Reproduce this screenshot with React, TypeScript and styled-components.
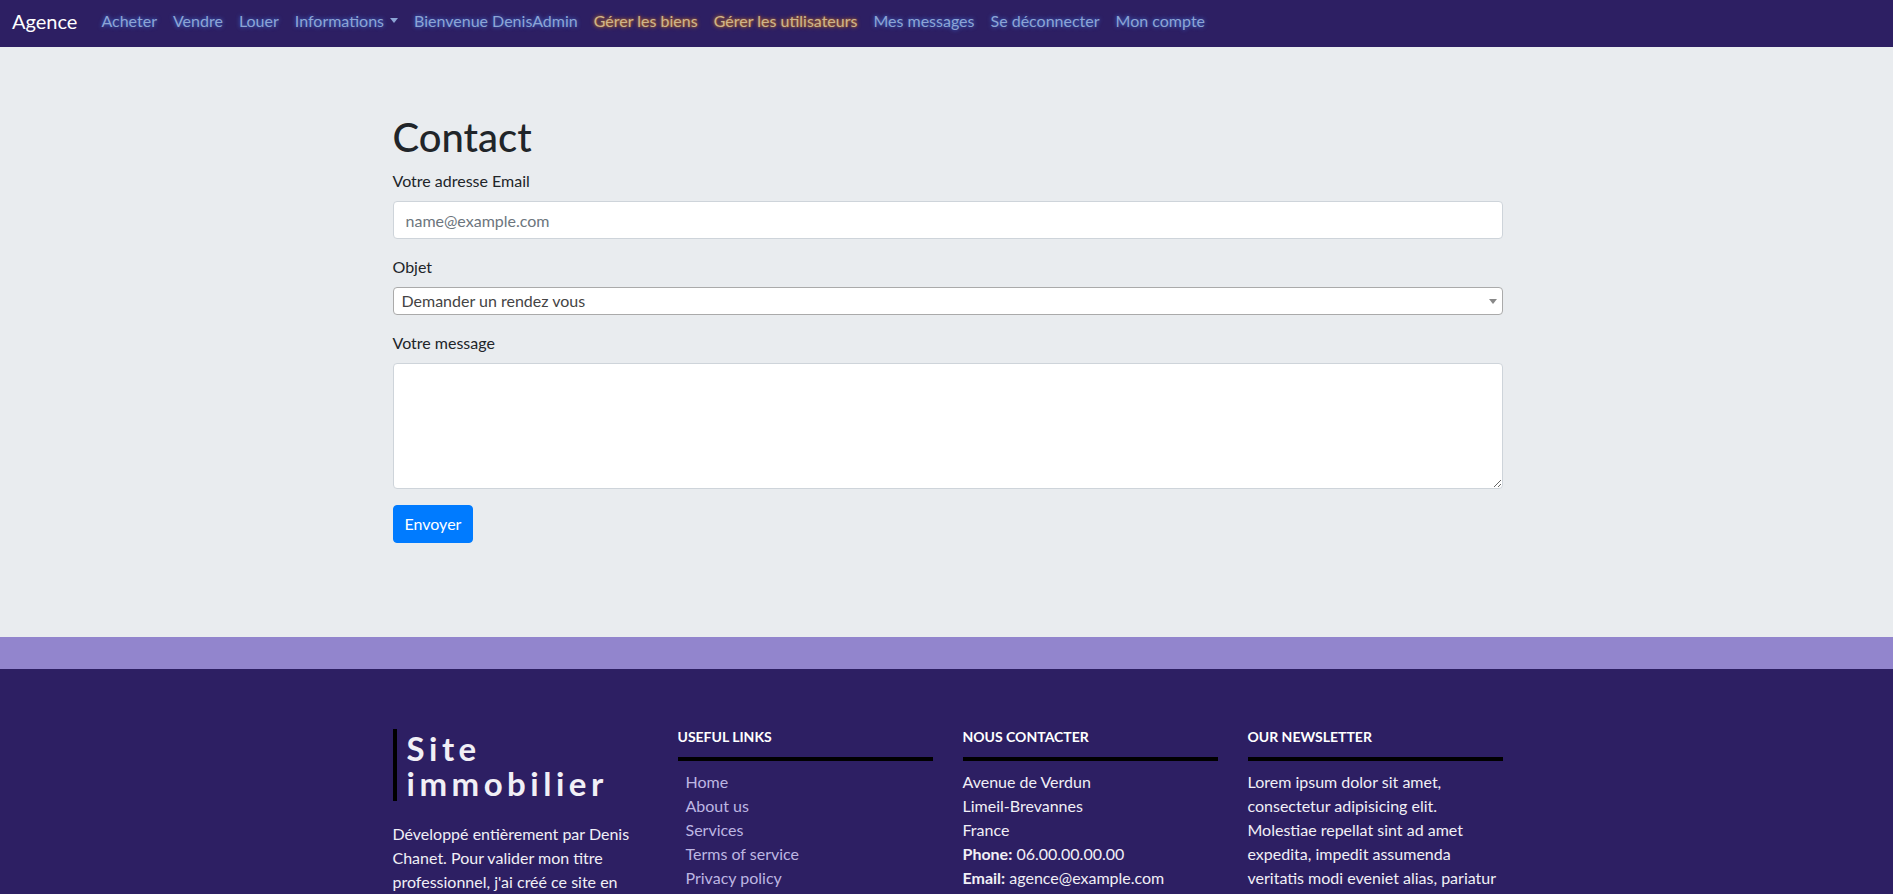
import React from "react";
import styled, { createGlobalStyle } from "styled-components";

const FONT = `"Segoe UI", Lato, "Liberation Sans", sans-serif`;

const GlobalStyle = createGlobalStyle`
  * { box-sizing: border-box; }
  html, body { margin: 0; padding: 0; }
  body {
    font-family: ${FONT};
    font-size: 16px;
    line-height: 1.5;
    color: #212529;
    background: #9285cd;
  }
`;

const NavBar = styled.nav`
  height: 47px;
  background: #2d1f63;
  display: flex;
  align-items: center;
  padding: 0 12px 6px;
`;

const Brand = styled.a`
  font-size: 20px;
  color: #ffffff;
  margin-right: 16px;
  text-decoration: none;
  line-height: 30px;
`;

const NavList = styled.ul`
  display: flex;
  align-items: center;
  list-style: none;
  margin: 0;
  padding: 0;
`;

const NavLink = styled.a<{ $gold?: boolean }>`
  display: block;
  padding: 0 8px;
  font-size: 16px;
  line-height: 24px;
  text-decoration: none;
  color: ${(p) => (p.$gold ? "#cdb58c" : "#8ca5d5")};
  text-shadow: ${(p) =>
    p.$gold
      ? "0 0 4px rgba(205, 120, 30, 0.95), 0 0 2px rgba(205, 120, 30, 0.7)"
      : "0 0 4px rgba(70, 130, 240, 0.85)"};
`;

const Caret = styled.span`
  display: inline-block;
  margin-left: 6px;
  vertical-align: 4px;
  border-top: 5px solid #8ca5d5;
  border-left: 4.5px solid transparent;
  border-right: 4.5px solid transparent;
`;

const Jumbotron = styled.main`
  background: #e9ecef;
  padding: 66px 0 94px;
  margin-bottom: 32px;
`;

const Container = styled.div`
  width: 1110px;
  margin: 0 auto;
  position: relative;
  left: 1px;
`;

const Title = styled.h1`
  font-size: 40px;
  font-weight: 500;
  line-height: 1.2;
  margin: 0 0 8px;
  color: #212529;
`;

const FormGroup = styled.div`
  margin-bottom: 16px;
`;

const Label = styled.label`
  display: block;
  margin-bottom: 8px;
  font-size: 16px;
  line-height: 24px;
  color: #212529;
`;

const Input = styled.input`
  display: block;
  width: 100%;
  height: 38px;
  padding: 6px 12px;
  font-family: ${FONT};
  font-size: 16px;
  line-height: 24px;
  color: #495057;
  background: #fff;
  border: 1px solid #ced4da;
  border-radius: 4px;
  &::placeholder { color: #6c757d; }
`;

const SelectBox = styled.div`
  position: relative;
  height: 28px;
  background: #fff;
  border: 1px solid #aaa;
  border-radius: 4px;
  padding-left: 8px;
  line-height: 26px;
  font-size: 16px;
  color: #444;
`;

const SelectArrow = styled.span`
  position: absolute;
  right: 5px;
  top: 11px;
  border-top: 5px solid #888;
  border-left: 4px solid transparent;
  border-right: 4px solid transparent;
`;

const TextArea = styled.textarea`
  display: block;
  width: 100%;
  height: 126px;
  padding: 6px 12px;
  font-family: ${FONT};
  font-size: 16px;
  background: #fff;
  border: 1px solid #ced4da;
  border-radius: 4px;
  resize: vertical;
`;

const Button = styled.button`
  font-family: ${FONT};
  font-size: 16px;
  line-height: 24px;
  padding: 6px 11px;
  color: #fff;
  background: #007bff;
  border: 1px solid #007bff;
  border-radius: 4px;
`;

const Footer = styled.footer`
  background: #2d1f63;
  padding: 60px 0 40px;
  color: #f2f2f7;
`;

const FooterGrid = styled.div`
  width: 1110px;
  margin: 0 auto;
  display: grid;
  grid-template-columns: repeat(4, 1fr);
  column-gap: 30px;
  align-items: start;
  position: relative;
  left: 1px;
`;

const BrandTitle = styled.h2`
  margin: 0 0 21px;
  border-left: 4px solid #000;
  padding: 2px 0 0 10px;
  font-size: 33px;
  font-weight: 700;
  line-height: 35px;
  letter-spacing: 4.5px;
  color: #f1eff6;
`;

const FooterText = styled.p`
  margin: 0;
  font-size: 16px;
  line-height: 24px;
  color: #f1eff6;
`;

const ColTitle = styled.h4`
  margin: 0;
  font-size: 14px;
  font-weight: 700;
  line-height: 16px;
  text-transform: uppercase;
  color: #ffffff;
  padding-bottom: 12px;
  border-bottom: 4px solid #000;
`;

const ColBody = styled.div`
  margin-top: 9px;
  font-size: 16px;
  line-height: 24px;
  color: #f1eff6;
`;

const LinkList = styled.ul`
  list-style: none;
  margin: 9px 0 0;
  padding: 0 0 0 8px;
`;

const FooterLink = styled.a`
  display: block;
  font-size: 16px;
  line-height: 24px;
  color: #bdb6e2;
  text-decoration: none;
`;

const navItems = [
  { label: "Acheter" },
  { label: "Vendre" },
  { label: "Louer" },
  { label: "Informations", dropdown: true },
  { label: "Bienvenue DenisAdmin" },
  { label: "Gérer les biens", gold: true },
  { label: "Gérer les utilisateurs", gold: true },
  { label: "Mes messages" },
  { label: "Se déconnecter" },
  { label: "Mon compte" },
];

const usefulLinks = ["Home", "About us", "Services", "Terms of service", "Privacy policy"];

export default function App() {
  return (
    <>
      <GlobalStyle />
      <NavBar>
        <Brand href="#">Agence</Brand>
        <NavList>
          {navItems.map((item) => (
            <li key={item.label}>
              <NavLink href="#" $gold={item.gold}>
                {item.label}
                {item.dropdown && <Caret />}
              </NavLink>
            </li>
          ))}
        </NavList>
      </NavBar>

      <Jumbotron>
        <Container>
          <Title>Contact</Title>
          <form onSubmit={(e) => e.preventDefault()}>
            <FormGroup>
              <Label htmlFor="email">Votre adresse Email</Label>
              <Input id="email" type="email" placeholder="name@example.com" />
            </FormGroup>
            <FormGroup>
              <Label>Objet</Label>
              <SelectBox>
                Demander un rendez vous
                <SelectArrow />
              </SelectBox>
            </FormGroup>
            <FormGroup>
              <Label htmlFor="message">Votre message</Label>
              <TextArea id="message" />
            </FormGroup>
            <Button type="submit">Envoyer</Button>
          </form>
        </Container>
      </Jumbotron>

      <Footer>
        <FooterGrid>
          <div>
            <BrandTitle>
              Site
              <br />
              immobilier
            </BrandTitle>
            <FooterText>
              Développé entièrement par Denis Chanet. Pour valider mon titre professionnel, j'ai créé ce site en
              PHP avec le framework Symfony.
            </FooterText>
          </div>
          <div>
            <ColTitle>Useful links</ColTitle>
            <LinkList>
              {usefulLinks.map((l) => (
                <li key={l}>
                  <FooterLink href="#">{l}</FooterLink>
                </li>
              ))}
            </LinkList>
          </div>
          <div>
            <ColTitle>Nous contacter</ColTitle>
            <ColBody>
              Avenue de Verdun
              <br />
              Limeil-Brevannes
              <br />
              France
              <br />
              <strong>Phone:</strong> 06.00.00.00.00
              <br />
              <strong>Email:</strong> agence@example.com
            </ColBody>
          </div>
          <div>
            <ColTitle>Our newsletter</ColTitle>
            <ColBody>
              Lorem ipsum dolor sit amet, consectetur adipisicing elit. Molestiae repellat sint ad amet expedita,
              impedit assumenda veritatis modi eveniet alias, pariatur quos nulla.
            </ColBody>
          </div>
        </FooterGrid>
      </Footer>
    </>
  );
}
